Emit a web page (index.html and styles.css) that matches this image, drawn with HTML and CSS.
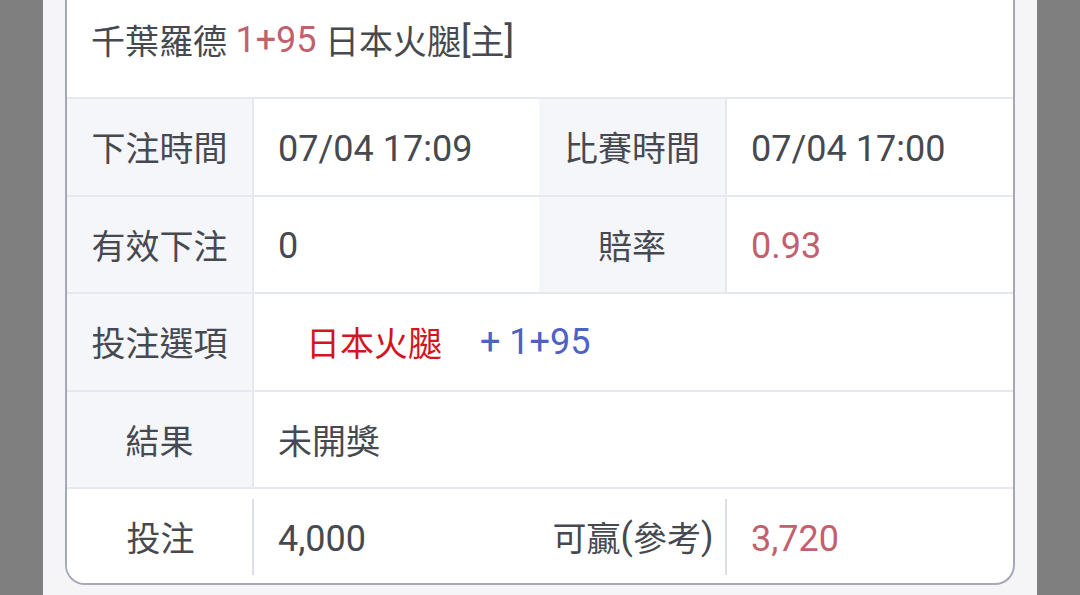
FILE: index.html
```html
<!DOCTYPE html>
<html lang="zh-Hant">
<head>
  <meta charset="UTF-8">
  <title>注單詳情</title>
  <link rel="stylesheet" href="styles.css">
</head>
<body>
  <div class="overlay">
    <div class="side side-left"></div>
    <div class="modal">
      <div class="card">
        <div class="card-title">千葉羅德 <span class="pink num">1+95</span> 日本火腿<span class="num">[</span>主<span class="num">]</span></div>

        <div class="grid">
          <div class="cell label">下注時間</div>
          <div class="cell value num">07/04 17:09</div>
          <div class="cell label label-mid">比賽時間</div>
          <div class="cell value num">07/04 17:00</div>

          <div class="cell label">有效下注</div>
          <div class="cell value num">0</div>
          <div class="cell label label-mid">賠率</div>
          <div class="cell value num pink">0.93</div>

          <div class="cell label">投注選項</div>
          <div class="cell value wide">
            <span class="team">日本火腿</span>
            <span class="handicap num">+ 1+95</span>
          </div>

          <div class="cell label">結果</div>
          <div class="cell value wide">未開獎</div>

          <div class="cell label last">投注</div>
          <div class="cell value last num">4,000</div>
          <div class="cell label label-mid last">可贏<span class="num">(</span>參考<span class="num">)</span></div>
          <div class="cell value last num pink">3,720</div>
        </div>
      </div>
    </div>
    <div class="side side-right"></div>
  </div>
</body>
</html>
```

FILE: styles.css
```css
html, body {
  margin: 0;
  padding: 0;
  height: 595px;
  overflow: hidden;
}

body {
  background-color: #7f7f7f;
  font-family: Roboto, "Noto Sans CJK TC", sans-serif;
  color: #46494f;
}

.overlay {
  display: flex;
  height: 595px;
}

.side {
  width: 43px;
  flex-shrink: 0;
}

.modal {
  width: 994px;
  background-color: #f5f5f7;
  padding: 0 22px;
  box-sizing: border-box;
}

.card {
  background-color: #fff;
  border: 2px solid #a4a8b9;
  border-top: none;
  border-radius: 0 0 20px 20px;
  overflow: hidden;
  height: 585px;
  box-sizing: border-box;
}

.card-title {
  height: 97px;
  box-sizing: border-box;
  padding: 0 0 18px 24px;
  display: flex;
  align-items: center;
  font-size: 34px;
  white-space: pre;
}

.num {
  font-size: 36px;
}

.pink {
  color: #c3606d;
}

.grid {
  display: grid;
  grid-template-columns: 187px 285px 188px 1fr;
  grid-auto-rows: 97.5px;
}

.cell {
  border-top: 2px solid #e6e8ef;
  display: flex;
  align-items: center;
  font-size: 34px;
  box-sizing: border-box;
}

.cell.num {
  font-size: 36px;
  padding-top: 4px;
}

.label {
  background-color: #f5f6fa;
  justify-content: center;
  border-right: 2px solid #e6e8ef;
}

.label-mid {
  border-right: 2px solid #e6e8ef;
}

.value {
  padding-left: 24px;
}

.wide {
  grid-column: span 3;
}

.team {
  color: #d2151e;
  margin-left: 28px;
}

.handicap {
  color: #4b62c6;
  margin-left: 38px;
}

.label.last {
  background-color: #fff;
  border-right: none;
}

.value.last {
  position: relative;
}

.value.last::before {
  content: "";
  position: absolute;
  left: -2px;
  top: 10px;
  bottom: 10px;
  width: 2px;
  background-color: #dcdfe8;
}
```
